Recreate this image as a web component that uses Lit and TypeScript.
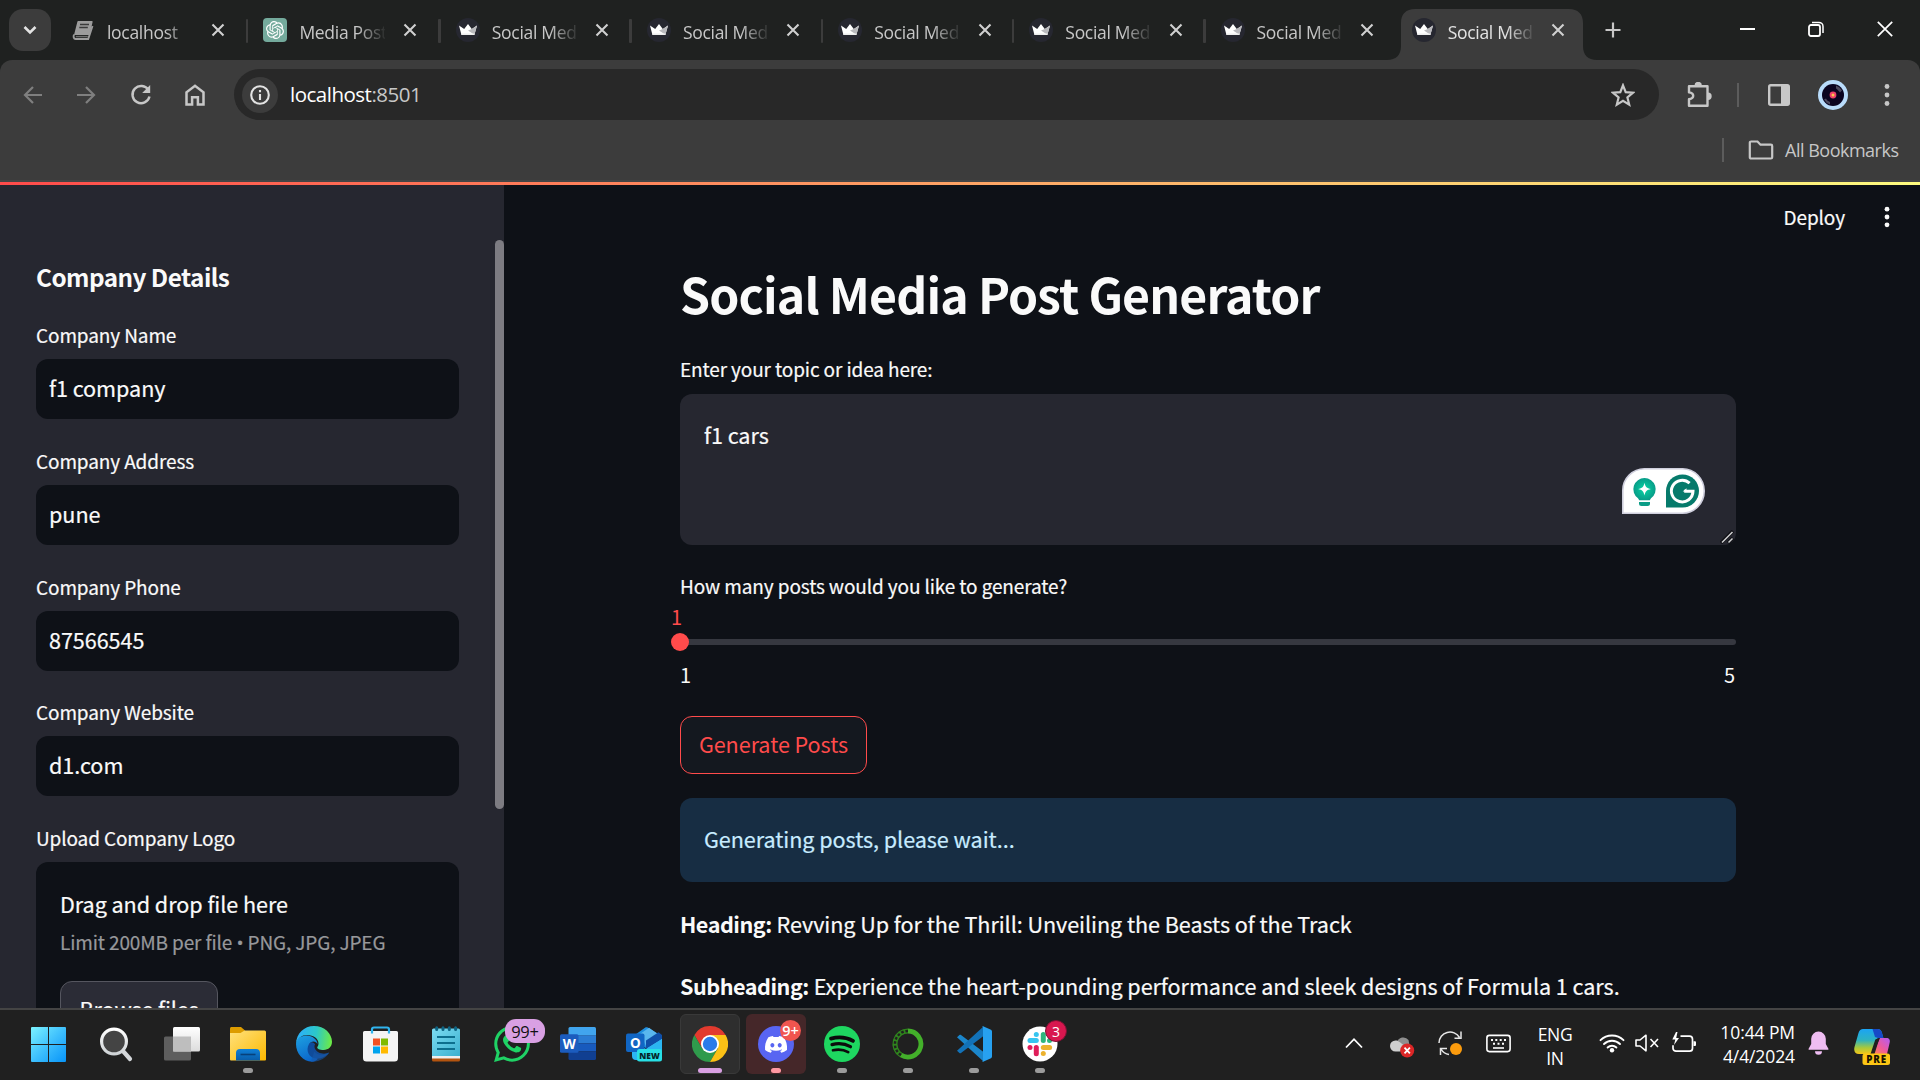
import { LitElement, html, css, svg, TemplateResult } from "lit";
import { customElement } from "lit/decorators.js";
import { classMap } from "lit/directives/class-map.js";

const icon = (w: number, h: number, body: unknown, box = `0 0 ${w} ${h}`) =>
  html`<svg width=${w} height=${h} viewBox=${box} fill="none">${body}</svg>`;

/* ---------- browser icons ---------- */
const closeX = () => icon(14, 14, svg`<path d="M1.5 1.5l11 11M12.5 1.5l-11 11" stroke="currentColor" stroke-width="2.1"/>`);
const crown = () => icon(24, 24, svg`<circle cx="12" cy="12" r="12" fill="#262730"/>
  <path d="M3 7.5l5.2 3.4L12 6l3.8 4.9L21 7.5 18.4 16.8H5.4z" fill="#fff"/>
  <path d="M12 12.5l3.8-1.6L21 7.5l-2.6 9.3z" fill="#b9b9bd"/><path d="M5.4 15.5h13l.2 1.6H5.3z" fill="#eee"/>`);
const book = () => icon(24, 24, svg`<path d="M7.2 3h13.600c.6 0 .9.5.8 1l-3 13H3L6.300 4c.1-.6.4-1 .9-1z" fill="#9c9c9c"/>
  <path d="M3 16.500c-1 2.500-.2 4.500 1.600 4.500h12.600L21.500 8" stroke="#9c9c9c" stroke-width="1.900"/><path d="M4.800 18.600h12" stroke="#6e6e6e" stroke-width="1.400"/>
  <path d="M9 6.500h9M8.300 9.500h8.500" stroke="#3a3a3a" stroke-width="1.300"/>`);
const openai = () => icon(24, 24, svg`<rect width="24" height="24" rx="4" fill="#74aa9c"/>
  <g transform="translate(3 3) scale(.75)"><path fill="#fff" d="M22.2819 9.8211a5.9847 5.9847 0 0 0-.5157-4.9108 6.0462 6.0462 0 0 0-6.5098-2.9A6.0651 6.0651 0 0 0 4.9807 4.1818a5.9847 5.9847 0 0 0-3.9977 2.9 6.0462 6.0462 0 0 0 .7427 7.0966 5.98 5.98 0 0 0 .511 4.9107 6.051 6.051 0 0 0 6.5146 2.9001A5.9847 5.9847 0 0 0 13.2599 24a6.0557 6.0557 0 0 0 5.7718-4.2058 5.9894 5.9894 0 0 0 3.9977-2.9001 6.0557 6.0557 0 0 0-.7475-7.0729zm-9.022 12.6081a4.4755 4.4755 0 0 1-2.8764-1.0408l.1419-.0804 4.7783-2.7582a.7948.7948 0 0 0 .3927-.6813v-6.7369l2.02 1.1686a.071.071 0 0 1 .038.052v5.5826a4.504 4.504 0 0 1-4.4945 4.4944zm-9.6607-4.1254a4.4708 4.4708 0 0 1-.5346-3.0137l.142.0852 4.783 2.7582a.7712.7712 0 0 0 .7806 0l5.8428-3.3685v2.3324a.0804.0804 0 0 1-.0332.0615L9.74 19.9502a4.4992 4.4992 0 0 1-6.1408-1.6464zM2.3408 7.8956a4.485 4.485 0 0 1 2.3655-1.9728V11.6a.7664.7664 0 0 0 .3879.6765l5.8144 3.3543-2.0201 1.1685a.0757.0757 0 0 1-.071 0l-4.8303-2.7865A4.504 4.504 0 0 1 2.3408 7.872zm16.5963 3.8558L13.1038 8.364 15.1192 7.2a.0757.0757 0 0 1 .071 0l4.8303 2.7913a4.4944 4.4944 0 0 1-.6765 8.1042v-5.6772a.79.79 0 0 0-.407-.667zm2.0107-3.0231l-.142-.0852-4.7735-2.7818a.7759.7759 0 0 0-.7854 0L9.409 9.2297V6.8974a.0662.0662 0 0 1 .0284-.0615l4.8303-2.7866a4.4992 4.4992 0 0 1 6.6802 4.66zM8.3065 12.863l-2.02-1.1638a.0804.0804 0 0 1-.038-.0567V6.0742a4.4992 4.4992 0 0 1 7.3757-3.4537l-.142.0805L8.704 5.459a.7948.7948 0 0 0-.3927.6813zm1.0976-2.3654l2.602-1.4998 2.6069 1.4998v2.9994l-2.5974 1.4997-2.6067-1.4997Z"/></g>`);
const chevronDown = () => icon(16, 12, svg`<path d="M2.500 3l5.500 5.500L13.500 3" stroke="#e3e3e3" stroke-width="2.600"/>`);
const plus = () => icon(16, 16, svg`<path d="M8 .5v15M.5 8h15" stroke="#c7c7c7" stroke-width="2.200"/>`);
const minimize = () => icon(16, 16, svg`<path d="M1 8h15" stroke="#fff" stroke-width="2"/>`);
const restore = () => icon(16, 16, svg`<rect x="1" y="4" width="11" height="11" rx="2" stroke="#fff" stroke-width="1.800"/><path d="M4 1.400h7a4 4 0 0 1 4 4v6.600" stroke="#fff" stroke-width="1.500"/>`);
const winClose = () => icon(16, 16, svg`<path d="M.8.8l14.400 14.400M15.200.8L.8 15.200" stroke="#fff" stroke-width="1.700"/>`);
const back = () => icon(20, 18, svg`<path d="M19 9H2M10 1L2 9l8 8" stroke="#7f7f7f" stroke-width="2.200"/>`);
const forward = () => icon(20, 18, svg`<path d="M1 9h17M10 1l8 8-8 8" stroke="#7f7f7f" stroke-width="2.200"/>`);
const reload = () => icon(22, 22, svg`<path d="M18.500 6.200A8.600 8.600 0 1 0 19.500 12.500" stroke="#c7c7c7" stroke-width="2.400"/><path d="M20.200 1v8h-8z" fill="#c7c7c7"/>`);
const home = () => icon(20, 22, svg`<path d="M1.500 20.600V8.300L10 1.800l8.500 6.500v12.300h-5.600v-7.400H7.100v7.400z" stroke="#c7c7c7" stroke-width="2.500"/>`);
const info = () => icon(20, 20, svg`<circle cx="10" cy="10" r="8.800" stroke="#e3e3e3" stroke-width="2.100"/><path d="M10 9v6M10 5v2.200" stroke="#e3e3e3" stroke-width="2.100"/>`);
const star = () => icon(24, 24, svg`<path d="M12 2.300l2.700 6.900 7.300.500-5.600 4.700 1.800 7.200-6.200-3.900-6.200 3.900 1.800-7.200L2 9.700l7.300-.500z" stroke="#c7c7c7" stroke-width="2.200"/>`);
const puzzle = () => icon(26, 26, svg`<path d="M3 4.200h18.500v19.600H3v-6.600c5.600-.8 5.600-6 0-6.800z" stroke="#c7c7c7" stroke-width="2.400" stroke-linejoin="round"/><path d="M8.500 3.500a3.700 3.700 0 0 1 7.400 0zM22 10.500a3.700 3.700 0 0 1 0 7.400z" fill="#c7c7c7"/>`);
const panel = () => icon(22, 22, svg`<rect x="1.200" y="1.200" width="19.600" height="19.600" rx="1.500" stroke="#c7c7c7" stroke-width="2.400"/><path d="M13 1h8v20h-8z" fill="#c7c7c7"/>`);
const avatar = () => icon(30, 30, svg`<circle cx="15" cy="15" r="15" fill="#b9dcfb"/><circle cx="15" cy="15" r="11" fill="#0a0420"/><path d="M18 5.500a10.500 10.500 0 0 1 6 5l-2 2c-1.500-2-2.500-3-4-4z" fill="#4d4a5e"/><path d="M12 24.500a10.500 10.500 0 0 1-6-5l2-1c1 2 2 2.500 4 3.500z" fill="#4d4a5e"/><circle cx="15" cy="15" r="3.400" fill="#ee3f6b"/><circle cx="15" cy="15" r="1.500" fill="#fbc84c"/>`);
const dots = (c: string, s: number) => icon(6, 22, svg`<circle cx="3" cy=${11 - s} r="2.400" fill=${c}/><circle cx="3" cy="11" r="2.400" fill=${c}/><circle cx="3" cy=${11 + s} r="2.400" fill=${c}/>`);
const folderLine = () => icon(26, 20, svg`<path d="M1.800 2.800c0-.8.5-1.300 1.300-1.300h6.400l3 3.200h10.400c.800 0 1.300.500 1.300 1.300v11.200c0 .800-.500 1.300-1.300 1.300H3.100c-.800 0-1.300-.5-1.300-1.300z" stroke="#c7c7c7" stroke-width="2.200"/>`);

/* ---------- taskbar icons ---------- */
const winLogo = () => icon(35, 35, svg`<defs><linearGradient id="wl" x1="0" y1="0" x2="35" y2="35" gradientUnits="userSpaceOnUse"><stop stop-color="#7cf3ff"/><stop offset=".5" stop-color="#3fc0fd"/><stop offset="1" stop-color="#0794f8"/></linearGradient></defs>
  <path d="M0 1a1 1 0 0 1 1-1h16v17H0zM18 0h16a1 1 0 0 1 1 1v16H18zM0 18h17v17H1a1 1 0 0 1-1-1zM18 18h17v16a1 1 0 0 1-1 1H18z" fill="url(#wl)"/>`);
const searchIcon = () => icon(34, 36, svg`<defs><linearGradient id="sg" x1="0" y1="0" x2="0" y2="1"><stop stop-color="#fff"/><stop offset="1" stop-color="#cfd3d6"/></linearGradient></defs>
  <path d="M23.500 24.500l7.500 8.500" stroke="#d4d7da" stroke-width="4.200" stroke-linecap="round"/><circle cx="15" cy="15.500" r="12.400" fill="#444" stroke="url(#sg)" stroke-width="3.200"/>`);
const taskView = () => icon(36, 34, svg`<defs><linearGradient id="tv" x1="0" y1="0" x2="0" y2="1"><stop stop-color="#fff"/><stop offset="1" stop-color="#dcdcdc"/></linearGradient></defs>
  <rect y="9.500" width="27" height="24" rx="1.500" fill="#5e5e5e"/><rect x="9" width="27" height="24.500" rx="1.500" fill="url(#tv)"/><path d="M9 9.500h18v15H9z" fill="#bebebe"/>`);
const explorer = () => icon(36, 34, svg`<defs><linearGradient id="fo" x1="0" y1="0" x2="1" y2="1"><stop stop-color="#ffe17d"/><stop offset="1" stop-color="#fdb900"/></linearGradient><linearGradient id="fb" x1="0" y1="0" x2="0" y2="1"><stop stop-color="#0f80d8"/><stop offset="1" stop-color="#0a5ca8"/></linearGradient></defs>
  <path d="M0 1.500C0 .7.7 0 1.500 0H11l4 3.500-4 4H0z" fill="#dd9c00"/><path d="M0 6h10.500l4-2.500h20A1.500 1.500 0 0 1 36 5v27.500a1 1 0 0 1-1 1H1a1 1 0 0 1-1-1z" fill="url(#fo)"/>
  <path d="M6 33.500V26a4 4 0 0 1 4-4h16a4 4 0 0 1 4 4v7.500z" fill="url(#fb)"/><path d="M10.500 27.500h15" stroke="#07407a" stroke-width="1.600"/>`);
const edge = () => icon(36, 36, svg`<defs>
  <linearGradient id="e1" x1="4" y1="12" x2="35" y2="16" gradientUnits="userSpaceOnUse"><stop stop-color="#2bb3f3"/><stop offset=".5" stop-color="#2cc8c8"/><stop offset="1" stop-color="#6bea48"/></linearGradient>
  <linearGradient id="e2" x1="4" y1="10" x2="16" y2="36" gradientUnits="userSpaceOnUse"><stop stop-color="#1c9de0"/><stop offset="1" stop-color="#0a62c9"/></linearGradient>
  <linearGradient id="e3" x1="10" y1="20" x2="32" y2="30" gradientUnits="userSpaceOnUse"><stop stop-color="#0c4a9e"/><stop offset="1" stop-color="#174d92"/></linearGradient></defs>
  <path d="M0 18C0 13 5 9.500 10.500 9.500c6 0 11 4.200 11 8.500-1.500-3-6-3.500-7.800-.300C10.500 23.500 14 31 22 32.500c-1 1.500-3.500 3.300-6 3.300C7 35.500 0 27.500 0 18z" fill="url(#e2)"/>
  <path d="M13 18c-4 7 .5 15.500 9.500 14.500 5-.5 9-3.500 10.700-6-5.200 2.500-12.500.8-14.400-4.300-.5-1.300-.4-3 .3-3.700C17.500 15.500 14.500 15.500 13 18z" fill="url(#e3)"/>
  <path d="M15 35.700c8 .8 15.500-4.200 18.200-9.200-5 3.500-12 3-15-1z" fill="#1558ab" opacity=".6"/>
  <path d="M0 17.500C.5 7.500 8 0 18 0c10.500 0 18 7.700 18 15.800 0 5-3.700 8.200-8.300 8.200-4.200 0-6.700-1.500-6.500-2.600.2-.8 1.300-1.300 1.300-3.900 0-4.500-4.500-8.500-11.500-8.500C6 9 1.500 12 0 17.500z" fill="url(#e1)"/>`);
const store = () => icon(35, 36, svg`<path d="M9 7V3.500c0-1 .8-2 2-2h13c1.200 0 2 1 2 2V7" stroke="#30b4ee" stroke-width="2.200"/><path d="M0 6.500A1.500 1.500 0 0 1 1.500 5h32A1.500 1.500 0 0 1 35 6.500V32a3.500 3.500 0 0 1-3.500 3.500h-28A3.500 3.500 0 0 1 0 32z" fill="#f4f4f4"/>
  <path d="M10 12.500h7v7h-7z" fill="#f25022"/><path d="M18 12.500h7v7h-7z" fill="#7fba00"/><path d="M10 20.500h7v7h-7z" fill="#00a4ef"/><path d="M18 20.500h7v7h-7z" fill="#ffb900"/><path d="M9 5v2.500M26 5v2.500" stroke="#30b4ee" stroke-width="2.200"/>`);
const notepad = () => icon(28, 36, svg`<defs><linearGradient id="np" x1="0" y1="0" x2="1" y2="1"><stop stop-color="#7bdcf2"/><stop offset="1" stop-color="#3cb0cf"/></linearGradient></defs>
  <path d="M0 31.500h28V34a1.500 1.500 0 0 1-1.500 1.500h-25A1.500 1.500 0 0 1 0 34z" fill="#b4540f"/><path d="M0 29h28v3.500H0z" fill="#eee"/><path d="M0 4a1.500 1.500 0 0 1 1.500-1.500h25A1.500 1.500 0 0 1 28 4v26H0z" fill="url(#np)"/>
  <path d="M5 11h18M5 17h18M5 23h18" stroke="#0d6f8e" stroke-width="1.800"/><path d="M4.700 1.800v1.800M11 1.800v1.800M17.300 1.800v1.800M23.600 1.800v1.800" stroke="#0d6483" stroke-width="3" stroke-linecap="round"/>`);
const whatsapp = () => icon(36, 36, svg`<path fill="#1fd265" d="M17.472 14.382c-.297-.149-1.758-.867-2.03-.967-.273-.099-.471-.148-.67.15-.197.297-.767.966-.94 1.164-.173.199-.347.223-.644.075-.297-.15-1.255-.463-2.39-1.475-.883-.788-1.48-1.761-1.653-2.059-.173-.297-.018-.458.13-.606.134-.133.298-.347.446-.52.149-.174.198-.298.298-.497.099-.198.05-.371-.025-.52-.075-.149-.669-1.612-.916-2.207-.242-.579-.487-.5-.669-.51-.173-.008-.371-.01-.57-.01-.198 0-.52.074-.792.372-.272.297-1.04 1.016-1.04 2.479 0 1.462 1.065 2.875 1.213 3.074.149.198 2.096 3.2 5.077 4.487.709.306 1.262.489 1.694.625.712.227 1.36.195 1.871.118.571-.085 1.758-.719 2.006-1.413.248-.694.248-1.289.173-1.413-.074-.124-.272-.198-.57-.347m-5.421 7.403h-.004a9.87 9.87 0 01-5.031-1.378l-.361-.214-3.741.982.998-3.648-.235-.374a9.86 9.86 0 01-1.51-5.26c.001-5.45 4.436-9.884 9.888-9.884 2.64 0 5.122 1.03 6.988 2.898a9.825 9.825 0 012.893 6.994c-.003 5.45-4.437 9.884-9.885 9.884m8.413-18.297A11.815 11.815 0 0012.05 0C5.495 0 .16 5.335.157 11.892c0 2.096.547 4.142 1.588 5.945L.057 24l6.305-1.654a11.882 11.882 0 005.683 1.448h.005c6.554 0 11.89-5.335 11.893-11.893a11.821 11.821 0 00-3.48-8.413z"/>`, "0 0 24 24");
const word = () => icon(36, 34, svg`<path d="M8.500 1.500A1.500 1.500 0 0 1 10 0h24.500A1.500 1.500 0 0 1 36 1.500V8.500H8.500z" fill="#41a5ee"/><path d="M8.500 8.300H36v8H8.500z" fill="#2b7cd3"/><path d="M8.500 16.300H36v8H8.500z" fill="#185abd"/><path d="M8.500 24.300H36v7.200a1.500 1.500 0 0 1-1.500 1.500H10a1.500 1.500 0 0 1-1.500-1.500z" fill="#103f91"/>
  <rect y="7.200" width="18.500" height="18.500" rx="1.500" fill="#1b5cbe"/><text x="9.250" y="21.500" text-anchor="middle" font-family="Open Sans, sans-serif" font-weight="700" font-size="13.500" fill="#fff">W</text>`);
const outlook = () => icon(36, 36, svg`<path d="M6 11L19 1.800c1-.6 2-.6 3 0L34 9v4L20 22 6 14z" fill="#1f8fe0"/><path d="M14 8l9-6.200L36 11v3L22 24z" fill="#59b7ee"/><path d="M20 14.500L32.500 6.300 36 9v4L20 23z" fill="#0f4fa8"/><path d="M6 15l14 8 16-10v17a4 4 0 0 1-4 4H10a4 4 0 0 1-4-4z" fill="#2bb6f2"/>
  <rect y="7.500" width="18.500" height="18.500" rx="2" fill="#1166c4"/><text x="9.250" y="21.700" text-anchor="middle" font-family="Open Sans, sans-serif" font-weight="700" font-size="13.500" fill="#fff">O</text>
  <rect x="11" y="23" width="25" height="12.500" rx="2.500" fill="#28e0e6"/><text x="23.500" y="32.700" text-anchor="middle" textLength="20.500" lengthAdjust="spacingAndGlyphs" font-family="Open Sans, sans-serif" font-weight="800" font-size="9.400" fill="#05262b">NEW</text>`);
const chrome = () => icon(36, 36, svg`<path d="M2.410 9A18 18 0 0 1 33.590 9H18L10.200 22.500z" fill="#e23a2e"/><path d="M2.410 9L10.200 22.500H25.800L18 36A18 18 0 0 1 2.410 9z" fill="#2f9a4c"/><path d="M33.590 9H18L25.800 22.500 18 36A18 18 0 0 0 33.590 9z" fill="#fbc116"/><circle cx="18" cy="18" r="9" fill="#fff"/><circle cx="18" cy="18" r="7.200" fill="#2b7bea"/>`);
const discord = () => icon(36, 36, svg`<circle cx="18" cy="18" r="18" fill="#5865f2"/><g transform="translate(7 7.300) scale(.92)"><path fill="#fff" d="M20.317 4.3698a19.7913 19.7913 0 00-4.8851-1.5152.0741.0741 0 00-.0785.0371c-.211.3753-.4447.8648-.6083 1.2495-1.8447-.2762-3.68-.2762-5.4868 0-.1636-.3933-.4058-.8742-.6177-1.2495a.077.077 0 00-.0785-.037 19.7363 19.7363 0 00-4.8852 1.515.0699.0699 0 00-.0321.0277C.5334 9.0458-.319 13.5799.0992 18.0578a.0824.0824 0 00.0312.0561c2.0528 1.5076 4.0413 2.4228 5.9929 3.0294a.0777.0777 0 00.0842-.0276c.4616-.6304.8731-1.2952 1.226-1.9942a.076.076 0 00-.0416-.1057c-.6528-.2476-1.2743-.5495-1.8722-.8923a.077.077 0 01-.0076-.1277c.1258-.0943.2517-.1923.3718-.2914a.0743.0743 0 01.0776-.0105c3.9278 1.7933 8.18 1.7933 12.0614 0a.0739.0739 0 01.0785.0095c.1202.099.246.1981.3728.2924a.077.077 0 01-.0066.1276 12.2986 12.2986 0 01-1.873.8914.0766.0766 0 00-.0407.1067c.3604.698.7719 1.3628 1.225 1.9932a.076.076 0 00.0842.0286c1.961-.6067 3.9495-1.5219 6.0023-3.0294a.077.077 0 00.0313-.0552c.5004-5.177-.8382-9.6739-3.5485-13.6604a.061.061 0 00-.0312-.0286zM8.02 15.3312c-1.1825 0-2.1569-1.0857-2.1569-2.419 0-1.3332.9555-2.4189 2.157-2.4189 1.2108 0 2.1757 1.0952 2.1568 2.419 0 1.3332-.9555 2.4189-2.1569 2.4189zm7.9748 0c-1.1825 0-2.1569-1.0857-2.1569-2.419 0-1.3332.9554-2.4189 2.1569-2.4189 1.2108 0 2.1757 1.0952 2.1568 2.419 0 1.3332-.946 2.4189-2.1568 2.4189Z"/></g>`);
const spotify = () => icon(36, 36, svg`<circle cx="18" cy="18" r="18" fill="#1ed760"/><g stroke="#0c0c0c" stroke-linecap="round"><path d="M7 12.600c7.500-2 15.500-1.300 22 2.300" stroke-width="3.800"/><path d="M8 18.600c6.500-1.700 13-1 18.500 2.100" stroke-width="3.200"/><path d="M9 24.300c5.500-1.300 10.500-.8 15.200 1.900" stroke-width="2.700"/></g>`);
const anaconda = () => icon(34, 34, svg`<path d="M17 4A13 13 0 1 1 10 28" stroke="#43b02a" stroke-width="4.800"/><path d="M17 4A13 13 0 0 0 10 28" stroke="#2f861d" stroke-width="5"/><path d="M17 4A13 13 0 0 0 10 28" stroke="#202020" stroke-width="2.400" stroke-dasharray="2.600 1.800"/>`);
const vscode = () => icon(36, 36, svg`<path d="M1 11.300l2.400-2.200c.5-.4 1.100-.4 1.600 0L27.500 26v9.500z" fill="#1b86cb"/><path d="M1 24.800l2.400 2.200c.5.400 1.100.400 1.600 0L27.500 10V.500z" fill="#1272b8"/><path d="M26.500 0L35 3.800c.6.300 1 .9 1 1.600v25.200c0 .700-.4 1.300-1 1.600L26.500 36c-.5 0 .500-.800.500-2V2c0-1.200-1-2-.500-2z" fill="#27a1f0"/>`);
const slack = () => icon(36, 36, svg`<circle cx="18" cy="18" r="17.500" fill="#fff"/>
  <g><rect x="11.800" y="6" width="5" height="5" rx="2.500" fill="#36c5f0"/><rect x="5.500" y="12" width="11.300" height="5" rx="2.500" fill="#36c5f0"/><rect x="18.800" y="6" width="5" height="11" rx="2.500" fill="#2eb67d"/><rect x="25" y="12" width="5" height="5" rx="2.500" fill="#2eb67d"/>
  <rect x="18.800" y="19" width="11.300" height="5" rx="2.500" fill="#ecb22e"/><rect x="18.800" y="25" width="5" height="5" rx="2.500" fill="#ecb22e"/><rect x="11.800" y="19" width="5" height="11.300" rx="2.500" fill="#e01e5a"/><rect x="5.500" y="19" width="5" height="5" rx="2.500" fill="#e01e5a"/></g>`);

/* ---------- tray icons ---------- */
const chevronUp = () => icon(18, 12, svg`<path d="M1 10.500L9 2.200l8 8.300" stroke="#fff" stroke-width="1.800"/>`);
const cloud = () => icon(26, 24, svg`<path d="M8 8.500A6.500 6.500 0 0 1 19.500 6l1 5-10 4z" fill="#8e8e8e"/><path d="M1 12a5.500 5.500 0 0 1 5.500-5.500c3 0 4 1.500 8 4.500l-3 6.500h-5A5.500 5.500 0 0 1 1 12z" fill="#cfcfcf"/><circle cx="18.200" cy="16.500" r="7" fill="#dc2626"/><path d="M15.500 13.700l5.400 5.600M20.900 13.700l-5.400 5.600" stroke="#fff" stroke-width="1.800"/>`);
const sync = () => icon(26, 26, svg`<path d="M2 13A11 11 0 0 1 22.500 7.500M24 1.500v6.800h-6.500M3.500 25v-6.500H10M4 19a11 11 0 0 0 8 5.500" stroke="#e6e6e6" stroke-width="1.500"/><circle cx="19" cy="19" r="6" fill="#fb9b0d"/>`);
const keyboard = () => icon(25, 19, svg`<rect x=".9" y="1.400" width="23.200" height="16.200" rx="2.500" stroke="#fff" stroke-width="1.600"/><path d="M5 6h2M9.300 6h2M13.700 6h2M18 6h2M7 9.700h2M11.500 9.700h2M16 9.700h2" stroke="#fff" stroke-width="2"/><path d="M7 14h11" stroke="#fff" stroke-width="1.600"/>`);
const wifi = () => icon(26, 20, svg`<g stroke="#fff" stroke-width="1.900" stroke-linecap="round"><path d="M1.500 7.200a16.300 16.300 0 0 1 23 0M5 11a11.400 11.400 0 0 1 16 0M8.600 14.500a6.300 6.300 0 0 1 8.800 0"/></g><circle cx="13" cy="17.300" r="2.200" fill="#fff"/>`);
const mute = () => icon(25, 18, svg`<path d="M1 6v6h4l6 4.800V1.200L5 6z" stroke="#fff" stroke-width="1.600" stroke-linejoin="round"/><path d="M15.500 5l7.500 8M23 5l-7.500 8" stroke="#fff" stroke-width="1.600"/>`);
const battery = () => icon(26, 22, svg`<path d="M9.500 4.200h9a3 3 0 0 1 3 3v9a3 3 0 0 1-3 3H5a3 3 0 0 1-3-3v-3" stroke="#fff" stroke-width="1.700"/><path d="M22.500 9.200H24a1 1 0 0 1 1 1V13a1 1 0 0 1-1 1h-1.500z" fill="#fff"/><path d="M5 0L1.300 7.500h3L3 13l5-7H5.200L6.500 0z" fill="#fff"/>`);
const bell = () => icon(21, 24, svg`<path d="M10.500.5a7.300 7.300 0 0 0-7.300 7.300v5.200L.6 17.800c-.2.500 0 1 .6 1h18.600c.6 0 .8-.5.6-1L17.800 13V7.800A7.300 7.300 0 0 0 10.500.5zM7 20.200h7a3.500 3.500 0 0 1-7 0z" fill="#efbdf2"/>`);
const copilot = () => icon(37, 36, svg`<defs><linearGradient id="c1" x1="0" y1="0" x2="0" y2="1"><stop stop-color="#1ba4f5"/><stop offset=".45" stop-color="#2eb3c0"/><stop offset=".75" stop-color="#a8c93c"/><stop offset="1" stop-color="#f5c518"/></linearGradient><linearGradient id="c2" x1="1" y1="0" x2="0" y2="1"><stop stop-color="#b45cf5"/><stop offset=".55" stop-color="#ee5a9c"/><stop offset="1" stop-color="#ff8b4b"/></linearGradient></defs>
  <path d="M9 0h14.500c2 0 3.500 1 4.200 3l1.600 6h-4c-2 0-3 1-3.500 2.800L17.500 25H5c-4 0-5.500-3-4.500-7L4.500 4c.7-2.500 2.500-4 4.500-4z" fill="url(#c1)"/><path d="M18.500 0h5c2 0 3.500 1 4.200 3l1.800 6h-5.500L21 8z" fill="#1749c7"/>
  <path d="M26 9h6.500c2.500 0 3.900 1.800 3.200 4.500L33 25H19z" fill="url(#c2)"/><path d="M16.500 25l4.800-14.500 4.200-1.500-5 16z" fill="#202020"/><rect x="8.500" y="24.500" width="27.500" height="11.500" rx="2.500" fill="#fcc615"/><text x="22.200" y="33.900" text-anchor="middle" textLength="20" font-family="Open Sans, sans-serif" font-weight="800" font-size="9.800" fill="#1a1400">PRE</text>`);
const assistant = () => icon(83, 46, svg`<defs><radialGradient id="bulb"><stop stop-color="#06d6a5"/><stop offset="1" stop-color="#089c88"/></radialGradient></defs>
  <path d="M.8 45.200V22.500A21.700 21.700 0 0 1 22.500.8h38a21.700 22.200 0 0 1 0 44.400z" fill="#fff" stroke="#cfcfdd" stroke-width="1.600"/>
  <path d="M22.500 10a11.200 11.200 0 0 0-6.500 20.300l1.200 2h10.600l1.200-2A11.200 11.200 0 0 0 22.500 10z" fill="url(#bulb)"/><path d="M22.500 14.700c1 4.300 2.200 5.500 6.400 6.400-4.200 1-5.400 2.200-6.400 6.400-1-4.200-2.200-5.400-6.400-6.400 4.200-.9 5.400-2.100 6.400-6.400z" fill="#fff"/><path d="M17 34h11v1.500a2.500 2.500 0 0 1-2.500 2.500h-6a2.500 2.500 0 0 1-2.500-2.500z" fill="#0a9c86"/>
  <path d="M44 39.500V23a16.500 16.500 0 1 1 16.500 16.500z" fill="#067a6b"/><path d="M67.600 15.200A10.800 10.800 0 1 0 71 23.300h-8.800" stroke="#fff" stroke-width="3"/><path d="M64.500 20.200l-3.800 3.300 3.800 0z" fill="#fff"/>`);
const grip = () => icon(14, 14, svg`<path d="M1 13L13 1M8 13l5-5" stroke="#101116" stroke-width="3.600"/><path d="M2 12.500L12.500 2M8.500 12.500L12.500 8.500" stroke="#d0d0d2" stroke-width="1.500"/>`);

interface Tab { title: string; icon: () => TemplateResult; active?: boolean; bar?: boolean; cls?: string }
const social = (extra: Partial<Tab> = {}): Tab => ({ title: "Social Media Post Generator", icon: crown, bar: true, ...extra });
const tabs: Tab[] = [
  { title: "localhost", icon: book, bar: true, cls: "wide" },
  { title: "Media Post Generator", icon: openai, bar: true, cls: "wide" },
  social(), social(), social(), social(), social({ bar: false }), social({ active: true, bar: false }),
];
const fields = [
  ["Company Name", "f1 company"], ["Company Address", "pune"],
  ["Company Phone", "87566545"], ["Company Website", "d1.com"],
];

@customElement("browser-chrome")
export class BrowserChrome extends LitElement {
  static styles = css`
    :host { display: block; height: 182px; background: #1f2120; font-family: "Open Sans", "Noto Sans", sans-serif; color: #c7c7c7; }
    svg { display: block; flex: none; }
    .strip { display: flex; height: 60px; }
    .menu { width: 42px; height: 42px; margin: 9px 4px 0 9px; border-radius: 14px; background: #3c3c3c; display: grid; place-items: center; }
    .tab { position: relative; box-sizing: border-box; width: 191.200px; height: 60px; padding: 0 0 0 16px; display: flex; align-items: center; flex: none; }
    .tab.wide { width: 192.400px; }
    .tab > * { position: relative; }
    .title { width: 86px; margin: 3px 0 0 12px; font-size: 17.500px; letter-spacing: -.3px; line-height: 24px; white-space: nowrap; overflow: hidden; -webkit-mask-image: linear-gradient(90deg, #000 58px, transparent 88px); mask-image: linear-gradient(90deg, #000 58px, transparent 88px); }
    .tab .x { margin-left: 17.500px; color: #d0d0d0; }
    .bar::after { content: ""; position: absolute; right: -1px; top: 19px; width: 2.500px; height: 24px; background: #3c3c3c; border-radius: 1px; }
    .active { color: #e3e3e3; }
    .shape { position: absolute !important; left: -9px; top: 9px; }
    .new { margin: 22px 0 0 18px; }
    .win { margin-left: auto; display: flex; gap: 53px; padding: 21px 27px 0 0; }
    .bottom { height: 120px; background: #3c3c3c; border-radius: 12px 12px 0 0; border-bottom: 2px solid #454545; }
    .toolbar { display: flex; align-items: center; height: 51px; padding: 9px 29.500px 0 23px; }
    .nav { display: flex; align-items: center; gap: 33.300px; width: 211px; flex: none; }
    .omni { display: flex; align-items: center; width: 1425px; flex: none; height: 51px; box-sizing: border-box; border-radius: 26px; background: #282828; padding: 0 24px 0 8px; }
    .chip { width: 36px; height: 36px; border-radius: 50%; background: #3c3c3c; display: grid; place-items: center; }
    .url { flex: 1; margin: -2px 0 0 12px; font-size: 20.500px; letter-spacing: -.5px; line-height: 30px; }
    .host { color: #fff; } .port { color: #c7c7c7; }
    .right { display: flex; align-items: center; padding-left: 27px; }
    .sep { width: 2px; height: 24px; background: #5c5c5c; }
    .right .sep { margin: 0 29px 0 25px; } .right svg + svg { margin-left: 28px; } .right svg:last-child { margin-left: 36px; }
    .marks { display: flex; align-items: center; justify-content: flex-end; height: 60px; padding-right: 21.500px; font-size: 18px; letter-spacing: -.5px; }
    .marks .sep { margin-right: 24px; } .marks span { margin: -1px 0 0 11px; line-height: 24px; }
  `;
  render() {
    return html`
      <div class="strip">
        <div class="menu">${chevronDown()}</div>
        ${tabs.map((t) => html`<div class=${classMap({ tab: true, active: !!t.active, bar: !!t.bar, wide: t.cls === "wide" })}>
          ${t.active ? html`<svg class="shape" width="210" height="51" viewBox="0 0 210 51"><path d="M0 51c9 0 14-5 14-14V14C14 5 19 0 28 0h154c9 0 14 5 14 14v23c0 9 5 14 14 14z" fill="#3c3c3c"/></svg>` : ""}
          ${t.icon()}<span class="title">${t.title}</span><span class="x">${closeX()}</span></div>`)}
        <div class="new">${plus()}</div>
        <div class="win">${minimize()}${restore()}${winClose()}</div>
      </div>
      <div class="bottom">
        <div class="toolbar">
          <div class="nav">${back()}${forward()}${reload()}${home()}</div>
          <div class="omni"><span class="chip">${info()}</span><span class="url"><span class="host">localhost</span><span class="port">:8501</span></span>${star()}</div>
          <div class="right">${puzzle()}<i class="sep"></i>${panel()}${avatar()}${dots("#c7c7c7", 8.5)}</div>
        </div>
        <div class="marks"><i class="sep"></i>${folderLine()}<span>All Bookmarks</span></div>
      </div>`;
  }
}

@customElement("post-generator")
export class PostGenerator extends LitElement {
  static styles = css`
    :host { display: block; height: 826px; overflow: hidden; background: #0e1117; color: #fafafa; font-family: "Noto Sans CJK SC", "Noto Sans CJK JP", sans-serif; font-size: 21.600px; letter-spacing: -.06px; -webkit-text-stroke: .2px currentColor; }
    svg { display: block; }
    .accent { height: 3px; background: linear-gradient(90deg, #ff4b4b, #fffd80); }
    .cols { display: flex; height: 823px; }
    .side { position: relative; width: 504px; box-sizing: border-box; padding: 76px 45px 0 36px; background: #262730; overflow: hidden; }
    .scroll { position: absolute; right: 0; top: 55px; width: 9px; height: 569px; border-radius: 5px; background: #7d7c82; }
    h3 { margin: 0 0 44px; height: 32px; line-height: 32px; font-size: 24.300px; font-weight: 700; letter-spacing: -.55px; -webkit-text-stroke: 0; white-space: nowrap; }
    .fields { display: flex; flex-direction: column; gap: 29.750px; margin-top: -14px; }
    .label { height: 24px; line-height: 24px; font-size: 19px; margin-bottom: 12px; white-space: nowrap; letter-spacing: -.12px; }
    .input { height: 60px; line-height: 58px; box-sizing: border-box; padding-left: 13px; border-radius: 12px; background: #0e1117; }
    .drop { height: 220px; border-radius: 12px; background: #0e1117; padding: 24px; box-sizing: border-box; }
    .drop p { margin: 0; line-height: 36px; white-space: nowrap; }
    .drop .limit { margin-top: 2px; font-size: 19px; color: #97989b; letter-spacing: -.13px; }
    .bullet { font-family: "Open Sans", sans-serif; }
    .browse { margin-top: 20px; width: 158px; height: 57px; box-sizing: border-box; border: 1px solid #55565f; border-radius: 12px; background: #2b2c36; line-height: 53px; text-align: center; letter-spacing: -.15px; }
    .main { position: relative; flex: 1; padding: 0 184px 0 176px; }
    .top { position: absolute; right: 30px; top: 20px; height: 24px; display: flex; align-items: center; gap: 39px; font-size: 19px; line-height: 24px; letter-spacing: -.1px; }
    h1 { margin: 0; padding-top: 73px; height: 70px; line-height: 70px; font-size: 48.200px; font-weight: 700; letter-spacing: -.86px; -webkit-text-stroke: 0; white-space: nowrap; }
    .l1 { margin: 29px 0 13px; }
    .area { position: relative; height: 151px; box-sizing: border-box; border-radius: 12px; background: #262730; padding: 24px; line-height: 34px; }
    .assist { position: absolute; right: 31px; top: 74px; } .grip { position: absolute; right: 2px; bottom: 1px; }
    .l2 { margin: 29px 0 0; }
    .slider, .range { font-size: 20px; -webkit-text-stroke: 0; }
    .val { margin: 7px 0 0 -9px; height: 24px; line-height: 24px; color: #ff4b4b; }
    .track { position: relative; height: 6px; margin-top: 10px; border-radius: 3px; background: #363840; }
    .thumb { position: absolute; left: -9px; top: -6px; width: 18px; height: 18px; border-radius: 50%; background: #ff4b4b; }
    .range { display: flex; justify-content: space-between; line-height: 24px; margin-top: 18px; padding-right: 1px; }
    .go { margin-top: 29px; width: 187px; height: 58px; box-sizing: border-box; border: 1px solid #ff4b4b; border-radius: 12px; background: #14181f; color: #ff4b4b; line-height: 54px; text-align: center; white-space: nowrap; -webkit-text-stroke: 0; }
    .info { margin-top: 24px; height: 84px; box-sizing: border-box; border-radius: 12px; padding-left: 24px; line-height: 82px; background: #172d43; color: #c7ebff; }
    .p { line-height: 36px; white-space: nowrap; margin: 0; } .p1 { margin-top: 24px; } .p2 { margin-top: 26px; }
    b { letter-spacing: -.48px; -webkit-text-stroke: 0; }
  `;
  render() {
    return html`
      <div class="accent"></div>
      <div class="cols">
        <aside class="side">
          <h3>Company Details</h3>
          <div class="fields">
            ${fields.map(([l, v]) => html`<div><div class="label">${l}</div><div class="input">${v}</div></div>`)}
            <div><div class="label">Upload Company Logo</div>
              <div class="drop"><p>Drag and drop file here</p><p class="limit">Limit 200MB per file <span class="bullet">•</span> PNG, JPG, JPEG</p>
                <div class="browse">Browse files</div></div></div>
          </div>
          <i class="scroll"></i>
        </aside>
        <main class="main">
          <div class="top"><span>Deploy</span>${dots("#fafafa", 7.8)}</div>
          <h1>Social Media Post Generator</h1>
          <div class="label l1">Enter your topic or idea here:</div>
          <div class="area">f1 cars<span class="assist">${assistant()}</span><span class="grip">${grip()}</span></div>
          <div class="label l2">How many posts would you like to generate?</div>
          <div class="slider"><div class="val">1</div><div class="track"><i class="thumb"></i></div></div>
          <div class="range"><span>1</span><span>5</span></div>
          <div class="go">Generate Posts</div>
          <div class="info">Generating posts, please wait...</div>
          <p class="p p1"><b>Heading:</b> Revving Up for the Thrill: Unveiling the Beasts of the Track</p>
          <p class="p p2"><b>Subheading:</b> Experience the heart-pounding performance and sleek designs of Formula 1 cars.</p>
        </main>
      </div>`;
  }
}

interface Task { icon: () => TemplateResult; dot?: string; badge?: string; kind?: string; cls?: string }
const tasks: Task[] = [
  { icon: winLogo, cls: "start" }, { icon: searchIcon }, { icon: taskView }, { icon: explorer, dot: "dot" }, { icon: edge },
  { icon: store }, { icon: notepad }, { icon: whatsapp, badge: "99+", kind: "wide" }, { icon: word }, { icon: outlook },
  { icon: chrome, dot: "line", cls: "on" }, { icon: discord, dot: "pink", badge: "9+", kind: "red", cls: "alert" },
  { icon: spotify, dot: "dot" }, { icon: anaconda, dot: "dot" }, { icon: vscode, dot: "dot" }, { icon: slack, dot: "dot", badge: "3", kind: "crimson" },
];

@customElement("task-bar")
export class TaskBar extends LitElement {
  static styles = css`
    :host { display: flex; height: 72px; box-sizing: border-box; border-top: 2px solid #444; background: #202020; color: #fff; font-family: "Open Sans", "Noto Sans", sans-serif; }
    svg { display: block; }
    .apps { display: flex; gap: 6px; padding: 4px 0 0 20px; }
    .app { position: relative; width: 60px; height: 60px; display: grid; place-items: center; border-radius: 6px; box-sizing: border-box; }
    .start svg { margin-left: -3px; }
    .on { background: #2e2e2e; border: 1px solid #393939; } .alert { background: #452729; }
    .mark { position: absolute; left: 50%; bottom: 1px; transform: translateX(-50%); width: 10px; height: 5px; border-radius: 3px; background: #9b9b9b; }
    .line { width: 24px; background: #d9a0e3; } .pink { background: #ff98a1; } .on .mark { bottom: 0; }
    .badge { position: absolute; display: grid; place-items: center; box-sizing: border-box; }
    .wide { left: 23px; top: 5px; width: 40px; height: 24px; border-radius: 11px; background: #d9a0e3; color: #111; font-size: 16.500px; letter-spacing: -.2px; }
    .red { left: 34px; top: 6px; width: 21px; height: 21px; border-radius: 50%; background: #f0554f; font-size: 14.500px; font-weight: 600; }
    .crimson { left: 35px; top: 6px; width: 22px; height: 22px; border-radius: 50%; background: #d8174f; border: 1.500px solid #7a1233; font-size: 14px; }
    .tray { margin-left: auto; display: flex; align-items: center; padding: 0 29px 4px 0; }
    .tray > * { flex: none; }
    .two { font-size: 17.500px; line-height: 24px; letter-spacing: -.3px; white-space: nowrap; }
    .lang { width: 60px; text-align: center; margin: 5px 14px 0; } .clock { width: 96px; text-align: right; margin: 1px 13px 0 2px; letter-spacing: -.1px; }
    .cloud { margin: 5px 22px 0 26px; } .kbd { margin-left: 23px; } .mute { margin: 0 11px 0 10px; } .copilot { margin: 8px 0 0 25px; }
  `;
  render() {
    return html`
      <div class="apps">${tasks.map((t) => html`<div class="app ${t.cls ?? ""}">${t.icon()}
        ${t.badge ? html`<span class="badge ${t.kind}">${t.badge}</span>` : ""}${t.dot ? html`<i class="mark ${t.dot}"></i>` : ""}</div>`)}</div>
      <div class="tray">
        <div>${chevronUp()}</div><div class="cloud">${cloud()}</div><div>${sync()}</div><div class="kbd">${keyboard()}</div>
        <div class="two lang">ENG<br />IN</div>
        <div>${wifi()}</div><div class="mute">${mute()}</div><div>${battery()}</div>
        <div class="two clock">10:44 PM<br />4/4/2024</div>
        <div>${bell()}</div><div class="copilot">${copilot()}</div>
      </div>`;
  }
}

@customElement("app-root")
export class AppRoot extends LitElement {
  static styles = css`
    :host { display: block; width: 1920px; height: 1080px; overflow: hidden; }
  `;
  render() {
    return html`<browser-chrome></browser-chrome><post-generator></post-generator><task-bar></task-bar>`;
  }
}
